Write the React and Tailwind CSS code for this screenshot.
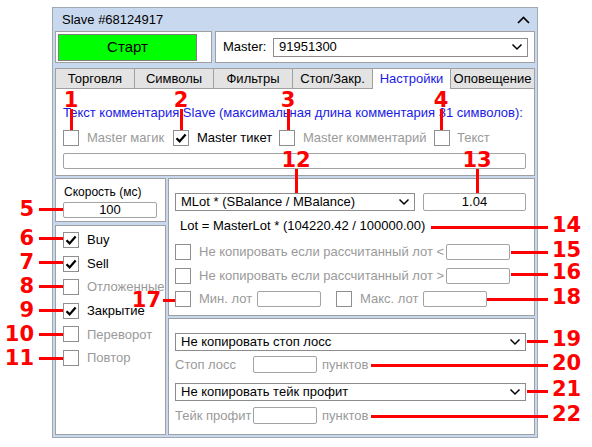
import React from "react";

const GRAY = "text-[#9a9a9a]";

function Box({ checked }) {
  return (
    <span className="w-[16px] h-[16px] shrink-0 border border-[#8f8f8f] bg-white flex items-center justify-center">
      {checked && (
        <svg width="14" height="14" viewBox="0 0 14 14">
          <path d="M2.5 7.2 L5.6 10.4 L11.6 3.4" fill="none" stroke="#000" strokeWidth="2.3" />
        </svg>
      )}
    </span>
  );
}

function Chevron() {
  return (
    <svg width="12" height="8" viewBox="0 0 12 8" className="shrink-0">
      <path d="M1.5 1.5 L6 6 L10.5 1.5" fill="none" stroke="#000" strokeWidth="1.5" />
    </svg>
  );
}

function Select({ text, className }) {
  return (
    <div className={`bg-white border border-[#8c8c8c] flex items-center justify-between pl-[5px] pr-[4px] ${className}`}>
      <span>{text}</span>
      <Chevron />
    </div>
  );
}

function Field({ value, className }) {
  return (
    <div className={`shrink-0 bg-white border border-[#a3a3a3] rounded-[2px] flex items-center justify-center ${className}`}>
      {value}
    </div>
  );
}

const TABS = [
  { label: "Торговля", w: "w-[79px]" },
  { label: "Символы", w: "w-[79px]" },
  { label: "Фильтры", w: "w-[79px]" },
  { label: "Стоп/Закр.", w: "w-[80px]" },
  { label: "Настройки", w: "w-[78px]", active: true },
  { label: "Оповещение", w: "w-[85px]", last: true },
];

const SIDES = [
  { label: "Buy", on: true },
  { label: "Sell", on: true },
  { label: "Отложенные" },
  { label: "Закрытие", on: true },
  { label: "Переворот" },
  { label: "Повтор" },
];

// red callouts drawn over the screenshot
const DOWN = [
  { n: "1", pos: "left-[56px] top-[91px]", line: "h-[21px]" },
  { n: "2", pos: "left-[166px] top-[91px]", line: "h-[21px]" },
  { n: "3", pos: "left-[273px] top-[91px]", line: "h-[21px]" },
  { n: "4", pos: "left-[426px] top-[91px]", line: "h-[21px]" },
  { n: "12", pos: "left-[281px] top-[151px]", line: "h-[24px]" },
  { n: "13", pos: "left-[462px] top-[151px]", line: "h-[24px]" },
];

const LEFT = [
  { n: "5", pos: "right-[529px] top-[200px]", line: "w-[24px] ml-[5px]" },
  { n: "6", pos: "right-[529px] top-[229px]", line: "w-[24px] ml-[5px]" },
  { n: "7", pos: "right-[529px] top-[253px]", line: "w-[24px] ml-[5px]" },
  { n: "8", pos: "right-[529px] top-[277px]", line: "w-[24px] ml-[5px]" },
  { n: "9", pos: "right-[529px] top-[301px]", line: "w-[24px] ml-[5px]" },
  { n: "10", pos: "right-[529px] top-[325px]", line: "w-[24px] ml-[5px]" },
  { n: "11", pos: "right-[529px] top-[349px]", line: "w-[24px] ml-[5px]" },
  { n: "17", pos: "right-[417px] top-[291px]", line: "w-[12px] ml-[2px]" },
];

const RIGHT = [
  { n: "14", pos: "left-[431px] top-[218px]", line: "w-[117px]" },
  { n: "15", pos: "left-[511px] top-[243px]", line: "w-[37px]" },
  { n: "16", pos: "left-[511px] top-[265px]", line: "w-[37px]" },
  { n: "18", pos: "left-[487px] top-[290px]", line: "w-[61px]" },
  { n: "19", pos: "left-[527px] top-[332px]", line: "w-[21px]" },
  { n: "20", pos: "left-[371px] top-[356px]", line: "w-[177px]" },
  { n: "21", pos: "left-[527px] top-[382px]", line: "w-[21px]" },
  { n: "22", pos: "left-[371px] top-[407px]", line: "w-[177px]" },
];

function Num({ n }) {
  return <span className="font-['DejaVu_Sans',sans-serif] font-bold text-[21px] leading-[18px] text-[#ff0000]">{n}</span>;
}

export default function App() {
  return (
    <div className="relative w-[592px] h-[447px] bg-white pl-[52px] pt-[7px] overflow-hidden font-['Liberation_Sans',Arial,sans-serif] text-[13px] text-black">
      <div className="w-[486px] h-[431px] border border-[#a0a8b4] bg-[#c8d8ee] px-[2px] pb-[2px] flex flex-col">
        <div className="h-[23px] shrink-0 flex items-center justify-between pl-[7px] pr-[5px]">
          <span>Slave #68124917</span>
          <svg width="13" height="8" viewBox="0 0 13 8">
            <path d="M1 7 L6.5 1.5 L12 7" fill="none" stroke="#000" strokeWidth="1.7" />
          </svg>
        </div>

        <div className="h-[32px] shrink-0 flex gap-[3px]">
          <div className="w-[157px] bg-white border border-[#a0a0a0] p-[2px]">
            <div className="w-[139px] h-[27px] border border-[#7f7f7f] bg-[#00ff00] flex items-center justify-center text-[15px]">Старт</div>
          </div>
          <div className="flex-1 bg-white border border-[#a0a0a0] flex items-center pl-[7px] pr-[6px]">
            <span>Master:</span>
            <Select text="91951300" className="ml-auto w-[255px] h-[19px]" />
          </div>
        </div>

        <div className="mt-[5px] h-[21px] shrink-0 flex">
          {TABS.map(t => (
            <div
              key={t.label}
              className={`${t.w} h-[21px] flex items-center justify-center border-l border-t border-[#a0a0a0] ${t.active ? "bg-white text-[#1a1ae6]" : "bg-[#e3e3e3] border-b"} ${t.last ? "border-r" : ""}`}
            >
              {t.label}
            </div>
          ))}
        </div>

        <div className="h-[87px] shrink-0 bg-white border-x border-b border-[#a0a0a0] pl-[7px] pt-[16px]">
          <div className="leading-[16px] text-[#1a1ae6]">Текст комментария Slave (максимальная длина комментария 31 символов):</div>
          <div className="mt-[9px] h-[16px] flex items-center">
            <div className="w-[110px] flex items-center"><Box /><span className={`ml-[8px] ${GRAY}`}>Master магик</span></div>
            <div className="w-[106px] flex items-center"><Box checked /><span className="ml-[8px]">Master тикет</span></div>
            <div className="w-[155px] flex items-center"><Box /><span className={`ml-[8px] ${GRAY}`}>Master комментарий</span></div>
            <div className="flex items-center"><Box /><span className={`ml-[7px] ${GRAY}`}>Текст</span></div>
          </div>
          <div className="mt-[7px] w-[463px] h-[16px] border border-[#a3a3a3] rounded-[2px]" />
        </div>

        <div className="mt-[2px] flex-1 flex gap-[2px]">
          <div className="w-[111px] flex flex-col gap-[3px]">
            <div className="h-[44px] bg-white border border-[#a0a0a0] pl-[7px] pt-[6px]">
              <div className="pl-[1px] leading-[14px] text-[12px]">Скорость (мс)</div>
              <Field value="100" className="mt-[3px] w-[94px] h-[16px]" />
            </div>
            <div className="flex-1 bg-white border border-[#a0a0a0] pl-[7px] pt-[6px] flex flex-col gap-[7.6px]">
              {SIDES.map(s => (
                <div key={s.label} className="h-[16px] flex items-center whitespace-nowrap">
                  <Box checked={s.on} />
                  <span className={`ml-[8px] ${s.on ? "" : GRAY}`}>{s.label}</span>
                </div>
              ))}
            </div>
          </div>

          <div className="flex-1 flex flex-col gap-[2px]">
            <div className="h-[138px] bg-white border border-[#a0a0a0] pl-[6px] pt-[14px]">
              <div className="flex">
                <Select text="MLot * (SBalance / MBalance)" className="w-[240px] h-[18px]" />
                <Field value="1.04" className="ml-[8px] w-[103px] h-[18px]" />
              </div>
              <div className="mt-[7px] pl-[5px] leading-[16px]">Lot = MasterLot * (104220.42 / 100000.00)</div>
              <div className="mt-[10px] h-[16px] flex items-center">
                <Box /><span className={`ml-[8px] w-[247px] ${GRAY}`}>Не копировать если рассчитанный лот &lt;</span>
                <Field className="w-[64px] h-[16px]" />
              </div>
              <div className="mt-[8px] h-[16px] flex items-center">
                <Box /><span className={`ml-[8px] w-[247px] ${GRAY}`}>Не копировать если рассчитанный лот &gt;</span>
                <Field className="w-[64px] h-[16px]" />
              </div>
              <div className="mt-[7px] h-[16px] flex items-center">
                <Box /><span className={`ml-[8px] w-[58px] ${GRAY}`}>Мин. лот</span>
                <Field className="w-[64px] h-[16px]" />
                <span className="ml-[15px]"><Box /></span>
                <span className={`ml-[8px] w-[63px] ${GRAY}`}>Макс. лот</span>
                <Field className="w-[64px] h-[16px]" />
              </div>
            </div>

            <div className="flex-1 bg-white border border-[#a0a0a0] pl-[6px] pt-[14px]">
              <Select text="Не копировать стоп лосс" className="w-[351px] h-[18px]" />
              <div className="mt-[5px] h-[17px] flex items-center">
                <span className={`w-[78px] ${GRAY}`}>Стоп лосс</span>
                <Field className="w-[64px] h-[17px]" />
                <span className={`ml-[5px] ${GRAY}`}>пунктов</span>
              </div>
              <Select text="Не копировать тейк профит" className="mt-[10px] w-[351px] h-[18px]" />
              <div className="mt-[6px] h-[17px] flex items-center">
                <span className={`w-[78px] ${GRAY}`}>Тейк профит</span>
                <Field className="w-[64px] h-[17px]" />
                <span className={`ml-[5px] ${GRAY}`}>пунктов</span>
              </div>
            </div>
          </div>
        </div>
      </div>

      {DOWN.map(t => (
        <div key={t.n} className={`absolute ${t.pos} w-[30px] flex flex-col items-center`}>
          <Num n={t.n} />
          <span className={`w-[3px] bg-[#ff0000] ${t.line}`} />
        </div>
      ))}
      {LEFT.map(t => (
        <div key={t.n} className={`absolute ${t.pos} h-[18px] flex items-center`}>
          <Num n={t.n} />
          <span className={`h-[3px] bg-[#ff0000] ${t.line}`} />
        </div>
      ))}
      {RIGHT.map(t => (
        <div key={t.n} className={`absolute ${t.pos} h-[18px] flex items-center`}>
          <span className={`h-[3px] bg-[#ff0000] ${t.line}`} />
          <span className="ml-[4px]"><Num n={t.n} /></span>
        </div>
      ))}
    </div>
  );
}
